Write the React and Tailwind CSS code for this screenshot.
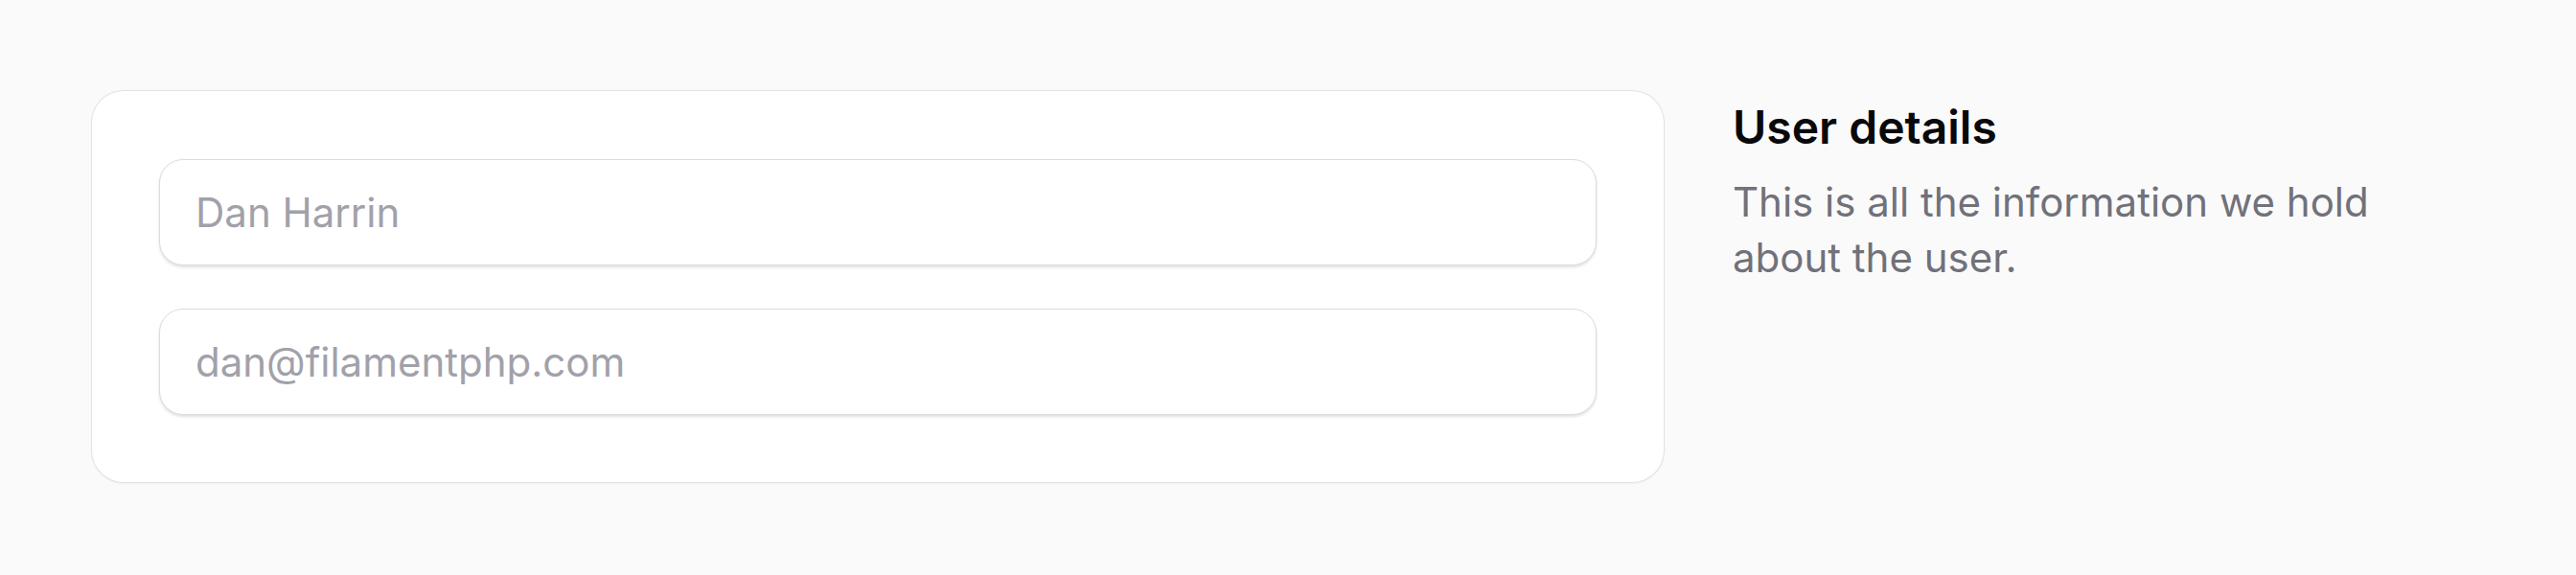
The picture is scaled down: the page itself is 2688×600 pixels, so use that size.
export default function App() {
    const fields = [
        { name: 'name', placeholder: 'Dan Harrin', type: 'text' },
        { name: 'email', placeholder: 'dan@filamentphp.com', type: 'email' },
    ];

    return (
        <div className="min-h-[600px] bg-[#fafafa] px-[96px] pt-[95px] font-['Inter',sans-serif]">
            <div className="flex items-start gap-[72px]">
                {/* Form card */}
                <div className="w-[1640px] shrink-0 rounded-[33px] bg-white px-[70px] pt-[71px] pb-[70px] shadow-[0_1px_3px_rgba(0,0,0,0.08)] ring-1 ring-[#e2e2e6]">
                    <div className="flex flex-col gap-[45px]">
                        {fields.map((field) => (
                            <input
                                key={field.name}
                                type={field.type}
                                placeholder={field.placeholder}
                                className="h-[111px] w-full rounded-[25px] border border-[#dcdce0] bg-white px-[37px] text-[42px] text-[#09090b] shadow-[0_2px_3px_rgba(0,0,0,0.12)] outline-none placeholder:text-[#a1a1aa]"
                            />
                        ))}
                    </div>
                </div>

                {/* Section description */}
                <div className="w-[700px] pt-[10px]">
                    <h2 className="text-[48px] leading-[56px] font-semibold text-[#09090b]">
                        User details
                    </h2>
                    <p className="mt-[21px] text-[42px] leading-[58px] text-[#71717a]">
                        This is all the information we hold about the user.
                    </p>
                </div>
            </div>
        </div>
    );
}
